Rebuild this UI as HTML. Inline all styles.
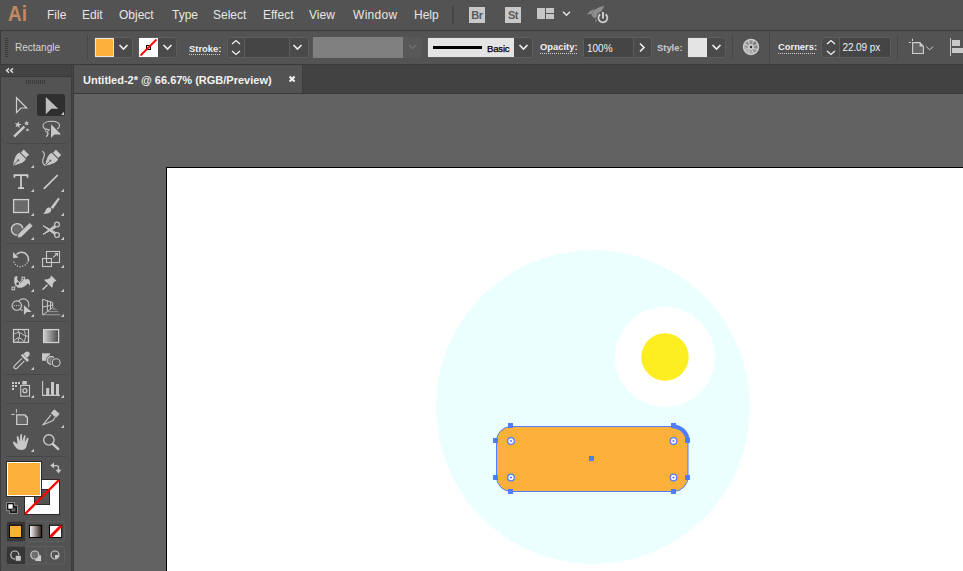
<!DOCTYPE html>
<html><head><meta charset="utf-8">
<style>
*{margin:0;padding:0;box-sizing:border-box}
html,body{width:963px;height:571px;overflow:hidden;background:#535353;font-family:"Liberation Sans",sans-serif;position:relative}
.a{position:absolute}
.menu{left:0;top:0;width:963px;height:30px;background:#535353}
.mi{position:absolute;top:8px;font-size:12px;color:#e6e6e6;line-height:14px;white-space:nowrap}
.ctl{left:0;top:30px;width:963px;height:35px;background:#535353;border-top:1px solid #3a3a3a;border-bottom:1px solid #3a3a3a}
.lbl{position:absolute;font-size:9.4px;font-weight:700;color:#f0f0f0;line-height:12px;white-space:nowrap}
.frame{position:absolute;border:1px solid #5d5d5d;border-radius:3px;background:#4a4a4a}
.chev{position:absolute}
.tabbar{left:72px;top:65px;width:891px;height:29px;background:#424242;border-bottom:1px solid #3a3a3a}
.paste{left:74px;top:94px;width:889px;height:477px;background:#626262}
.panel{left:0;top:65px;width:72px;height:506px;background:#535353}
.sep{position:absolute;background:#474747;height:1px}
.tri{position:absolute;width:0;height:0;border-left:4px solid transparent;border-bottom:4px solid #c4c4c4}
</style></head><body>

<!-- MENU BAR -->
<div class="a menu">
  <div class="a" style="left:8px;top:2px;font-size:22px;font-weight:700;color:#c48a60;line-height:24px;transform:scaleX(0.86);transform-origin:0 0">Ai</div>
  <div class="mi" style="left:47px">File</div>
  <div class="mi" style="left:82px">Edit</div>
  <div class="mi" style="left:119px">Object</div>
  <div class="mi" style="left:172px">Type</div>
  <div class="mi" style="left:213px">Select</div>
  <div class="mi" style="left:263px">Effect</div>
  <div class="mi" style="left:309px">View</div>
  <div class="mi" style="left:353px;letter-spacing:0.3px">Window</div>
  <div class="mi" style="left:414px">Help</div>
  <div class="a" style="left:452px;top:6px;width:2px;height:18px;background:#474747"></div>
  <div class="a" style="left:469px;top:7px;width:16px;height:16px;background:#c8c8c8;color:#5a5a5a;font-size:11px;font-weight:700;line-height:17px;text-align:center;letter-spacing:-0.4px">Br</div>
  <div class="a" style="left:505px;top:7px;width:16px;height:16px;background:#c8c8c8;color:#5a5a5a;font-size:11px;font-weight:700;line-height:17px;text-align:center;letter-spacing:-0.4px">St</div>
  <div class="a" style="left:537px;top:8px;width:8px;height:11px;background:#c6c6c6"></div>
  <div class="a" style="left:546px;top:8px;width:8px;height:5px;background:#c6c6c6"></div>
  <div class="a" style="left:546px;top:14px;width:8px;height:5px;background:#c6c6c6"></div>
  <svg class="a" style="left:562px;top:10px" width="10" height="7"><path d="M1 1.8 L4.5 5.2 L8 1.8" fill="none" stroke="#e0e0e0" stroke-width="1.6"/></svg>
  <svg class="a" style="left:580px;top:0" width="36" height="30" viewBox="580 0 36 30">
    <path d="M604.2 5.8 C600 6.3 595.8 8.4 593.1 11.6 L591.3 15.8 L595.2 18.4 C597.9 15.8 602.1 12.1 604.2 5.8 Z" fill="#8c8c8c"/>
    <path d="M594.7 9.2 C591 9.8 588.5 11.8 586.8 14.5 L591.5 14 Z" fill="#8c8c8c"/>
    <path d="M595.8 17.9 L595.2 22.6 L597.6 19.8 Z" fill="#8c8c8c"/>
    <circle cx="602.9" cy="17.9" r="6.6" fill="#535353"/>
    <path d="M600.2 14.2 A4.5 4.5 0 1 0 605.6 14.2" fill="none" stroke="#d2d2d2" stroke-width="1.7"/>
    <rect x="602" y="12" width="1.9" height="6.6" fill="#d2d2d2"/>
  </svg>
</div>

<!-- CONTROL BAR -->
<div class="a ctl"></div>
<div class="a" style="left:0;top:30px;width:1px;height:35px;background:#3a3a3a"></div>
<div class="a" style="left:5px;top:38px;width:3px;height:20px;background:repeating-linear-gradient(#3a3a3a 0 1px,transparent 1px 2px)"></div>
<div class="a" style="left:15px;top:42px;font-size:10px;color:#d4d4d4;line-height:12px">Rectangle</div>
<div class="a" style="left:87px;top:35px;width:1px;height:25px;background:#474747"></div>

<!-- fill -->
<div class="frame" style="left:94px;top:37px;width:39px;height:21px"></div>
<div class="a" style="left:95px;top:38px;width:19px;height:19px;background:#fbb03b;border:1px solid #e6e6e6"></div>
<svg class="a" style="left:118px;top:43px" width="11" height="8"><path d="M1.5 2 L5.5 6 L9.5 2" fill="none" stroke="#f0f0f0" stroke-width="1.6"/></svg>
<!-- stroke -->
<div class="frame" style="left:138px;top:37px;width:39px;height:21px"></div>
<div class="a" style="left:139px;top:38px;width:19px;height:19px;background:#fff;overflow:hidden">
  <svg width="19" height="19"><rect x="7.5" y="7.5" width="4" height="4" fill="#fff" stroke="#000" stroke-width="1"/><path d="M1.5 17.5 L17.5 1.5" stroke="#f00" stroke-width="1.8"/></svg>
</div>
<svg class="a" style="left:162px;top:43px" width="11" height="8"><path d="M1.5 2 L5.5 6 L9.5 2" fill="none" stroke="#f0f0f0" stroke-width="1.6"/></svg>

<div class="lbl" style="left:189px;top:43px">Stroke:</div>
<div class="a" style="left:189px;top:54px;width:32px;height:1px;background:repeating-linear-gradient(90deg,#cfcfcf 0 1px,transparent 1px 2px)"></div>
<div class="frame" style="left:227px;top:37px;width:82px;height:21px;background:#4a4a4a"></div>
<div class="a" style="left:244px;top:38px;width:46px;height:19px;background:#454545;border-left:1px solid #5d5d5d;border-right:1px solid #5d5d5d"></div>
<svg class="a" style="left:230px;top:38px" width="12" height="19"><path d="M2 6 L6 2.5 L10 6 M2 13 L6 16.5 L10 13" fill="none" stroke="#f0f0f0" stroke-width="1.3"/></svg>
<svg class="a" style="left:292px;top:43px" width="11" height="8"><path d="M1.5 2 L5.5 6 L9.5 2" fill="none" stroke="#f0f0f0" stroke-width="1.6"/></svg>

<!-- variable width (disabled) -->
<div class="frame" style="left:312px;top:37px;width:110px;height:21px;background:#585858;border-color:#585858"></div>
<div class="a" style="left:313px;top:37px;width:90px;height:21px;background:#808080"></div>
<svg class="a" style="left:407px;top:43px" width="11" height="8"><path d="M2 2 L5.5 5.5 L9 2" fill="none" stroke="#6e6e6e" stroke-width="1.6"/></svg>

<!-- brush Basic -->
<div class="frame" style="left:427px;top:37px;width:106px;height:21px"></div>
<div class="a" style="left:428px;top:38px;width:86px;height:19px;background:#e4e4e4"></div>
<div class="a" style="left:433px;top:46px;width:49px;height:3px;background:#000"></div>
<div class="a" style="left:487px;top:43px;font-size:9.6px;font-weight:400;color:#000;line-height:12px;-webkit-text-stroke:0.25px #000;letter-spacing:-0.2px">Basic</div>
<svg class="a" style="left:518px;top:43px" width="11" height="8"><path d="M1.5 2 L5.5 6 L9.5 2" fill="none" stroke="#f0f0f0" stroke-width="1.6"/></svg>

<div class="lbl" style="left:540px;top:41px">Opacity:</div>
<div class="a" style="left:540px;top:53px;width:37px;height:1px;background:repeating-linear-gradient(90deg,#cfcfcf 0 1px,transparent 1px 2px)"></div>
<div class="frame" style="left:583px;top:37px;width:69px;height:21px"></div>
<div class="a" style="left:584px;top:38px;width:50px;height:19px;background:#454545;border-right:1px solid #5d5d5d"></div>
<div class="a" style="left:587px;top:42.5px;font-size:10px;color:#f0f0f0;line-height:12px">100%</div>
<svg class="a" style="left:638px;top:42px" width="8" height="11"><path d="M2 1.5 L6 5.5 L2 9.5" fill="none" stroke="#f0f0f0" stroke-width="1.6"/></svg>

<div class="a" style="left:657px;top:42px;font-size:9.4px;font-weight:700;color:#cccccc;line-height:12px">Style:</div>
<div class="frame" style="left:687px;top:37px;width:39px;height:21px"></div>
<div class="a" style="left:688px;top:38px;width:19px;height:19px;background:#e4e4e4"></div>
<svg class="a" style="left:711px;top:43px" width="11" height="8"><path d="M1.5 2 L5.5 6 L9.5 2" fill="none" stroke="#f0f0f0" stroke-width="1.6"/></svg>
<div class="a" style="left:732px;top:35px;width:1px;height:25px;background:#474747"></div>

<svg class="a" style="left:742px;top:38px" width="18" height="18" viewBox="0 0 18 18">
  <circle cx="9" cy="9" r="8.2" fill="#cdcdcd"/>
  <path d="M8.12 6.13 L7.04 2.59 A6.7 6.7 0 0 1 10.96 2.59 L9.88 6.13 Z" fill="#8e8e8e"/><path d="M10.41 6.35 L12.15 3.08 A6.7 6.7 0 0 1 14.92 5.85 L11.65 7.59 Z" fill="#7f7f7f"/><path d="M11.87 8.12 L15.41 7.04 A6.7 6.7 0 0 1 15.41 10.96 L11.87 9.88 Z" fill="#8a8a8a"/><path d="M11.65 10.41 L14.92 12.15 A6.7 6.7 0 0 1 12.15 14.92 L10.41 11.65 Z" fill="#9a9a9a"/><path d="M9.88 11.87 L10.96 15.41 A6.7 6.7 0 0 1 7.04 15.41 L8.12 11.87 Z" fill="#a8a8a8"/><path d="M7.59 11.65 L5.85 14.92 A6.7 6.7 0 0 1 3.08 12.15 L6.35 10.41 Z" fill="#b0b0b0"/><path d="M6.13 9.88 L2.59 10.96 A6.7 6.7 0 0 1 2.59 7.04 L6.13 8.12 Z" fill="#a0a0a0"/><path d="M6.35 7.59 L3.08 5.85 A6.7 6.7 0 0 1 5.85 3.08 L7.59 6.35 Z" fill="#989898"/>
  <circle cx="9" cy="9" r="1.2" fill="#2e2e2e"/>
</svg>
<div class="a" style="left:769px;top:32px;width:1px;height:31px;background:#474747"></div>

<div class="lbl" style="left:778px;top:41px">Corners:</div>
<div class="a" style="left:778px;top:53px;width:38px;height:1px;background:repeating-linear-gradient(90deg,#cfcfcf 0 1px,transparent 1px 2px)"></div>
<div class="frame" style="left:821px;top:37px;width:70px;height:21px"></div>
<div class="a" style="left:839px;top:38px;width:51px;height:19px;background:#454545;border-left:1px solid #5d5d5d"></div>
<svg class="a" style="left:825px;top:38px" width="12" height="19"><path d="M2 6 L6 2.5 L10 6 M2 13 L6 16.5 L10 13" fill="none" stroke="#f0f0f0" stroke-width="1.3"/></svg>
<div class="a" style="left:842.5px;top:42.3px;font-size:10px;letter-spacing:-0.1px;color:#f0f0f0;line-height:12px">22.09 px</div>
<div class="a" style="left:897px;top:35px;width:1px;height:25px;background:#474747"></div>

<svg class="a" style="left:900px;top:30px" width="40" height="30" viewBox="900 30 40 30">
  <path d="M912.5 38.8 V41 M908.8 42.5 H911" stroke="#cfcfcf" stroke-width="1"/>
  <path d="M912.6 42.6 H919.8 L923.4 46.2 V53.5 H912.6 Z" fill="#656565" stroke="#cfcfcf" stroke-width="1.1"/>
  <path d="M919.6 42.6 L923.4 46.4 H919.6 Z" fill="#cfcfcf"/>
  <path d="M926.2 46.6 L929.7 49.8 L933.2 46.6" fill="none" stroke="#c8c8c8" stroke-width="1"/>
</svg>
<div class="a" style="left:950px;top:38px;width:1px;height:18px;background:#c8c8c8"></div>
<div class="a" style="left:952px;top:40px;width:8px;height:6px;background:#c8c8c8"></div>
<div class="a" style="left:952px;top:48px;width:11px;height:5px;background:#c8c8c8"></div>

<!-- TAB BAR -->
<div class="a tabbar"></div>
<div class="a" style="left:71px;top:65px;width:3px;height:506px;background:linear-gradient(90deg,#3d3d3d 0 1px,#464646 1px 2px,#3a3a3a 2px 3px)"></div>
<div class="a" style="left:74px;top:65px;width:228px;height:28px;background:#535353"></div><div class="a" style="left:302px;top:65px;width:1px;height:28px;background:#3c3c3c"></div>
<div class="a" style="left:83px;top:74px;font-size:11px;font-weight:700;color:#f2f2f2;line-height:13px;white-space:nowrap">Untitled-2* @ 66.67% (RGB/Preview)</div>
<svg class="a" style="left:288px;top:75px" width="9" height="9"><path d="M1.6 1.6 L6.6 6.6 M6.6 1.6 L1.6 6.6" stroke="#f2f2f2" stroke-width="2.1"/></svg>

<!-- PASTEBOARD -->
<div class="a paste"></div>
<div class="a" style="left:166px;top:167px;width:797px;height:404px;background:#fff;border-left:1px solid #000;border-top:1px solid #000"></div>

<!-- ARTWORK -->
<svg class="a" style="left:0;top:0" width="963" height="571">
  <circle cx="593" cy="407" r="157" fill="#ebffff"/>
  <circle cx="665" cy="357" r="50" fill="#ffffff"/>
  <circle cx="665" cy="357" r="23.7" fill="#fcee21"/>
  <rect x="496.5" y="426.5" width="191.5" height="65" rx="14.7" ry="14.7" fill="#fbb03b" stroke="#4f7dff" stroke-width="1"/>
  <path d="M673 426.5 A14.7 14.7 0 0 1 687.7 441" fill="none" stroke="#4f7dff" stroke-width="4"/>
  <g fill="#4f7dff">
    <rect x="508" y="423" width="5" height="5"/><rect x="671" y="423" width="5" height="5"/>
    <rect x="508" y="489" width="5" height="5"/><rect x="671" y="489" width="5" height="5"/>
    <rect x="493" y="438" width="5" height="5"/><rect x="685" y="438" width="5" height="5"/>
    <rect x="493" y="475" width="5" height="5"/><rect x="685" y="475" width="5" height="5"/>
    <rect x="589" y="456" width="5" height="5"/>
  </g>
  <g fill="#fff" stroke="#4f7dff" stroke-width="1.3">
    <circle cx="511" cy="441" r="3.3"/><circle cx="673.5" cy="441" r="3.3"/>
    <circle cx="511" cy="477.5" r="3.3"/><circle cx="673.5" cy="477.5" r="3.3"/>
  </g>
  <g fill="#4f7dff">
    <circle cx="511" cy="441" r="1.1"/><circle cx="673.5" cy="441" r="1.1"/>
    <circle cx="511" cy="477.5" r="1.1"/><circle cx="673.5" cy="477.5" r="1.1"/>
  </g>
</svg>

<!-- TOOLS PANEL -->
<div class="a" style="left:0;top:65px;width:71px;height:11px;background:#434343"></div>
<div class="a" style="left:0;top:76px;width:71px;height:1px;background:#3a3a3a"></div>
<div class="a" style="left:0;top:77px;width:71px;height:494px;background:#535353;border-left:1px solid #3d3d3d"></div>
<svg class="a" style="left:0;top:62px" width="20" height="14"><path d="M9 6.4 L6.6 8.6 L9 10.8 M13 6.4 L10.6 8.6 L13 10.8" fill="none" stroke="#d8d8d8" stroke-width="1.5" stroke-linejoin="miter"/></svg>
<div class="a" style="left:26px;top:80px;width:20px;height:4px;background:repeating-linear-gradient(90deg,#3a3a3a 0 1px,transparent 1px 2px)"></div>


<!-- TOOLS SVG -->
<svg class="a" style="left:0;top:0" width="72" height="571" viewBox="0 0 72 571">
 <defs>
  <linearGradient id="gt" x1="0" x2="1" y1="0" y2="0"><stop offset="0" stop-color="#cfcfcf"/><stop offset="1" stop-color="#474747"/></linearGradient>
  <linearGradient id="gs" x1="0" x2="1" y1="0" y2="0"><stop offset="0" stop-color="#ffffff"/><stop offset="1" stop-color="#2a1a16"/></linearGradient>
 </defs>
 <g fill="#c8c8c8">
  <!-- tiny triangles -->
  <path d="M61 115 H64 V111.8 Z"/>
  <path d="M30.8 168 H34 V164.8 Z"/>
  <path d="M30.8 192 H34 V188.8 Z"/><path d="M60.8 192 H64 V188.8 Z"/>
  <path d="M30.8 216 H34 V212.8 Z"/><path d="M60.8 216 H64 V212.8 Z"/>
  <path d="M30.8 240 H34 V236.8 Z"/><path d="M60.8 240 H64 V236.8 Z"/>
  <path d="M30.8 268 H34 V264.8 Z"/><path d="M60.8 268 H64 V264.8 Z"/>
  <path d="M30.8 292 H34 V288.8 Z"/><path d="M60.8 292 H64 V288.8 Z"/>
  <path d="M30.8 317 H34 V313.8 Z"/><path d="M60.8 317 H64 V313.8 Z"/>
  <path d="M30.8 370 H34 V366.8 Z"/>
  <path d="M30.8 398 H34 V394.8 Z"/><path d="M60.8 398 H64 V394.8 Z"/>
  <path d="M60.8 428 H64 V424.8 Z"/>
  <path d="M30.8 452 H34 V448.8 Z"/>
 </g>
 <!-- separators -->
 <g fill="#474747">
  <rect x="6" y="143" width="60" height="1"/>
  <rect x="6" y="243" width="60" height="1"/>
  <rect x="6" y="321" width="60" height="1"/>
  <rect x="6" y="374" width="60" height="1"/>
  <rect x="6" y="403" width="60" height="1"/>
  <rect x="6" y="456" width="60" height="1"/>
 </g>
 <!-- selection -->
 <rect x="37" y="94" width="28" height="22" rx="2.5" fill="#2f2f2f"/>
 <path d="M16.5 97.8 V112.6 L21 108 H26.7 Z" fill="none" stroke="#cfcfcf" stroke-width="1.2" stroke-linejoin="miter"/>
 <path d="M45.8 97 V114.3 L51.4 108.8 H58.3 Z" fill="#bdbdbd"/>
 <path d="M61 115 H64 V111.8 Z" fill="#c8c8c8"/>
 <!-- magic wand -->
 <g fill="#c8c8c8">
  <path d="M13.2 135.8 L23.4 125.8 L25.2 127.6 L15 137.6 Z"/>
  <path d="M18.63 121.25 L19.09 123.75 L21.56 124.30 L19.34 125.51 L19.58 128.04 L17.74 126.29 L15.41 127.30 L16.50 125.01 L14.82 123.11 L17.34 123.44 Z"/><path d="M26.11 120.54 L27.12 122.24 L29.07 121.99 L27.76 123.46 L28.61 125.25 L26.80 124.46 L25.37 125.82 L25.56 123.85 L23.83 122.91 L25.75 122.48 Z"/><path d="M27.50 127.90 L28.03 129.17 L29.40 129.28 L28.36 130.18 L28.68 131.52 L27.50 130.80 L26.32 131.52 L26.64 130.18 L25.60 129.28 L26.97 129.17 Z"/>
 </g>
 <!-- lasso -->
 <path d="M49.8 129.6 C46.5 130 43 128.6 43 125.8 C43 122.8 47 121.2 51.5 121.2 C56 121.2 59.5 122.8 59.5 125.5 C59.5 127 58.5 128.2 57 129" fill="none" stroke="#c8c8c8" stroke-width="1.1"/>
 <circle cx="46.8" cy="130.6" r="1.5" fill="none" stroke="#c8c8c8" stroke-width="1"/>
 <path d="M47.6 132 C48.3 133.5 47.8 135.5 46.2 136.8" fill="none" stroke="#c8c8c8" stroke-width="1.1"/>
 <path d="M51.1 124.2 V138 L54.3 134.4 H61.1 Z" fill="#535353" stroke="#535353" stroke-width="1.6"/>
 <path d="M51.1 124.2 V138 L54.3 134.4 H61.1 Z" fill="#c8c8c8"/>
 <!-- pen -->
 <g transform="translate(13.3,165.2) rotate(45) translate(0,-18.5)" fill="#c8c8c8">
  <rect x="-3.7" y="0" width="7.4" height="4.3"/>
  <path d="M-4.6 5.3 H4.6 C5.6 8.5 5 11.5 0.3 18.5 L-0.3 18.5 C-5 11.5 -5.6 8.5 -4.6 5.3 Z"/>
  <path d="M0 18.5 V12" stroke="#535353" stroke-width="0.9"/>
  <circle cx="0" cy="11.5" r="1" fill="#535353"/>
 </g>
 <!-- curvature pen -->
 <g transform="translate(45.5,165.4) rotate(45) translate(0,-18.5)" fill="#c8c8c8">
  <rect x="-3.7" y="0" width="7.4" height="4.3"/>
  <path d="M-4.6 5.3 H4.6 C5.6 8.5 5 11.5 0.3 18.5 L-0.3 18.5 C-5 11.5 -5.6 8.5 -4.6 5.3 Z"/>
  <path d="M0 18.5 V12" stroke="#535353" stroke-width="0.9"/>
  <circle cx="0" cy="11.5" r="1" fill="#535353"/>
 </g>
 <path d="M42.2 151.3 C45 152.5 44.8 155 43.4 158 C42 161 42.3 164 45.5 165.4" fill="none" stroke="#c8c8c8" stroke-width="1.1"/>
 <!-- type -->
 <path d="M14.4 177.8 V175.2 H27.5 V177.8 M21 175.2 V188.2 M18 188.2 H24" fill="none" stroke="#d0d0d0" stroke-width="1.7"/>
 <!-- line -->
 <path d="M43.8 188.8 L57.7 175" stroke="#cfcfcf" stroke-width="1.7"/>
 <!-- rect -->
 <rect x="13.6" y="199.6" width="14.9" height="12.9" fill="#6a6a6a" stroke="#d0d0d0" stroke-width="1.3"/>
 <!-- brush -->
 <g fill="#c8c8c8">
  <path d="M57.6 198.4 C58.6 197.4 60 198.2 59.4 199.6 L53 209 L50.7 207.2 Z"/>
  <path d="M48.6 207.5 C51 207 52 209.5 51 211.3 C49.8 213.5 46 214 43 213.8 C45 212.5 45.5 210.5 46 209.5 C46.6 208.3 47.5 207.7 48.6 207.5 Z"/>
 </g>
 <!-- shaper -->
 <circle cx="17.2" cy="229.4" r="5.8" fill="#6a6a6a" stroke="#d0d0d0" stroke-width="1.3"/>
 <path d="M18 237.2 L18.68 233.89 L29.68 223.24 L32.32 225.96 L21.32 236.61 Z" fill="#535353" stroke="#535353" stroke-width="2.2" stroke-linejoin="round"/>
 <path d="M18 237.2 L18.68 233.89 L29.68 223.24 L32.32 225.96 L21.32 236.61 Z" fill="#c8c8c8" stroke="#c8c8c8" stroke-width="0.6" stroke-linejoin="round"/>
 <!-- scissors -->
 <g fill="none" stroke="#c8c8c8">
  <circle cx="57" cy="224.6" r="2.4" stroke-width="1.2"/>
  <circle cx="57" cy="235.1" r="2.4" stroke-width="1.2"/>
 </g>
 <path d="M43 225.6 L55.4 232.3 L54.3 234.3 Z" fill="#c8c8c8" stroke="#c8c8c8" stroke-width="1" stroke-linejoin="round"/>
 <path d="M43 234.4 L55.4 227.7 L54.3 225.7 Z" fill="#c8c8c8" stroke="#c8c8c8" stroke-width="1" stroke-linejoin="round"/>
 <!-- rotate -->
 <path d="M16.5 254.5 C19.5 251.5 24.5 251.5 27 255 C28.5 257 28.6 259.5 28.2 261.5" fill="none" stroke="#c8c8c8" stroke-width="1.5"/>
 <path d="M13 252 L13.2 258.2 L18.5 257.5 Z" fill="#c8c8c8"/>
 <g fill="#c8c8c8">
  <circle cx="14" cy="262.2" r="0.7"/><circle cx="15.5" cy="264.4" r="0.7"/><circle cx="17.6" cy="266" r="0.7"/>
  <circle cx="20.2" cy="266.7" r="0.7"/><circle cx="22.8" cy="266.3" r="0.7"/><circle cx="25.2" cy="265" r="0.7"/><circle cx="27" cy="263" r="0.7"/>
 </g>
 <!-- scale -->
 <g fill="none" stroke="#c8c8c8" stroke-width="1.1">
  <rect x="46.5" y="251.5" width="13" height="11"/>
  <rect x="42.5" y="258.5" width="9" height="8"/>
  <path d="M53.3 257.3 L57.5 253.2"/>
 </g>
 <path d="M54.5 253 H58 V256.5 Z" fill="#c8c8c8"/>
 <!-- puppet warp -->
 <path d="M14.2 279.1 C14.5 277 15 276.3 15.8 276.3 C16.8 276.2 17.7 276.5 17.7 276.9 C17 277.8 17 279 17.3 279.5 C17.8 281 18.6 281.9 20 281.5 C21.5 281 23 280.3 24.5 279.6 C26.5 278.7 28.5 279 29.5 280.5 C30.3 282 30.2 284.5 29.8 286 C29.3 284.6 28.7 283.5 27.9 283.5 C26.5 284.5 25.5 286 24.2 286.6 C23 287.4 21.5 287.8 20.5 287.8 C18.5 287.8 16.5 287.3 15.5 286 C14.5 284.5 14 282 14.2 279.1 Z" fill="#c8c8c8"/>
 <path d="M13.3 288.5 L23.3 278.5" stroke="#535353" stroke-width="1.8"/>
 <path d="M13.3 288.5 L23.3 278.5" stroke="#c8c8c8" stroke-width="0.8"/>
 <circle cx="17.7" cy="283.8" r="2" fill="#535353" stroke="#c8c8c8" stroke-width="1.1"/>
 <rect x="12" y="287.2" width="2.6" height="2.6" fill="#535353" stroke="#c8c8c8" stroke-width="1"/>
 <rect x="22" y="277.2" width="2.6" height="2.6" fill="#535353" stroke="#c8c8c8" stroke-width="1"/>
 <!-- pin -->
 <path d="M51 275.2 L56.5 280.8 L54.5 281.5 C53 283 52.5 284.5 52.8 286.3 L52 287.8 L44.2 280 L45.7 279.2 C47.5 279.5 49 279 50.5 277.5 Z" fill="#c8c8c8"/>
 <path d="M43 289.2 L47 285.2" stroke="#c8c8c8" stroke-width="1.6" stroke-linecap="round"/>
 <!-- shape builder -->
 <circle cx="16.8" cy="305.6" r="4.7" fill="none" stroke="#c8c8c8" stroke-width="1.1"/>
 <path d="M18.6 301.2 C20 299.3 22 298.9 23.3 298.9 C26.5 298.9 28.9 301.4 28.9 304.6 C28.9 305.5 28.7 306.3 28.4 307" fill="none" stroke="#c8c8c8" stroke-width="1.1"/>
 <path d="M23.2 310.3 C21.8 310.3 20.6 310 19.6 309.4" fill="none" stroke="#c8c8c8" stroke-width="1.1"/>
 <g fill="#c8c8c8"><circle cx="14.3" cy="305.6" r="0.65"/><circle cx="16.6" cy="305.6" r="0.65"/><circle cx="18.9" cy="305.6" r="0.65"/><circle cx="21.2" cy="305.6" r="0.65"/><circle cx="23.3" cy="305.6" r="0.65"/></g>
 <path d="M23.9 305.3 V315 L26.8 312 H31.7 Z" fill="#535353" stroke="#535353" stroke-width="1.6"/>
 <path d="M23.9 305.3 V315 L26.8 312 H31.7 Z" fill="#c8c8c8"/>
 <!-- perspective grid -->
 <g fill="none" stroke="#c8c8c8" stroke-width="1">
  <path d="M42.6 299.3 V315 L52.7 307.7 V302.5 Z"/>
  <path d="M42.6 307 L52.7 305 M47.4 300.8 V311.6 M50.5 301.8 V309.3"/>
 </g>
 <path d="M52.7 306 L57.5 310 H52.7 Z" fill="#7a7a7a"/>
 <rect x="46.5" y="311.2" width="12" height="0.9" fill="#a0a0a0"/>
 <rect x="42.5" y="314.3" width="17.7" height="0.9" fill="#a8a8a8"/>
 <!-- mesh -->
 <rect x="13.5" y="329.5" width="15" height="12.8" fill="none" stroke="#d0d0d0" stroke-width="1.2"/>
 <g fill="none" stroke="#c8c8c8" stroke-width="1">
  <path d="M17.2 329.5 C18.5 331 19.5 333 19.5 335.2 C19.5 337.5 18.3 339.5 17.9 342.2"/>
  <path d="M13.5 334.4 C15 333.3 16.8 332.6 18.6 332.7 C20.8 332.8 22.6 334.2 24.5 335.6 C25.3 336.1 26 336.1 28.5 336.1"/>
  <path d="M23.5 329.5 C24.8 331.5 25.5 334 25.5 336.5 C25.5 338.8 24.5 340.7 23.6 342.2"/>
  <path d="M13.8 341.3 C15 339.6 16.5 338.2 18.3 338 C20 337.9 22 339 23.4 340.9"/>
 </g>
 <!-- gradient -->
 <rect x="43.6" y="329.6" width="15" height="12.9" fill="url(#gt)" stroke="#d0d0d0" stroke-width="1.3"/>
 <!-- eyedropper -->
 <g fill="#c8c8c8">
  <path d="M25.2 352.2 C26.3 351.1 28.1 351.2 29 352.2 C29.9 353.1 30 354.9 28.9 356 L27.2 357.7 L23.5 354 Z"/>
  <path d="M20.8 355.6 L22.7 353.7 L29.1 360.1 L27.2 362 Z"/>
 </g>
 <path d="M21.9 358.3 L14.6 365.6 C13.8 366.5 13.7 367.6 14.5 368.3 C15.3 369 16.3 368.9 17.1 368.1 L24.4 360.8" fill="#535353" stroke="#c8c8c8" stroke-width="1.2"/>
 <!-- blend -->
 <rect x="42" y="353.3" width="8" height="7.5" fill="#c8c8c8"/>
 <path d="M49.5 356.5 H52.5 L55 359 V362 L52.5 364.3 H49.5 L47.3 362 V358.7 Z" fill="#7e7e7e" stroke="#535353" stroke-width="2.4"/>
 <path d="M49.5 356.5 H52.5 L55 359 V362 L52.5 364.3 H49.5 L47.3 362 V358.7 Z" fill="#7e7e7e" stroke="#c8c8c8" stroke-width="1.1"/>
 <circle cx="56.2" cy="362.6" r="3.9" fill="#535353" stroke="#535353" stroke-width="2.4"/>
 <circle cx="56.2" cy="362.6" r="3.9" fill="#535353" stroke="#c8c8c8" stroke-width="1.1"/>
 <!-- symbol sprayer -->
 <g fill="#c8c8c8">
  <rect x="12" y="382" width="2" height="2"/><rect x="15" y="382" width="2" height="2"/><rect x="18" y="382" width="2" height="2"/>
  <rect x="12" y="385" width="2" height="2"/><rect x="15" y="385" width="2" height="2"/>
  <rect x="12" y="388" width="2" height="2"/>
  <rect x="22.3" y="381" width="4.5" height="3.5"/>
 </g>
 <rect x="20.7" y="385.4" width="8.8" height="10.8" fill="none" stroke="#c8c8c8" stroke-width="1.1"/>
 <circle cx="24.9" cy="390.7" r="2" fill="none" stroke="#c8c8c8" stroke-width="1.3"/>
 <!-- column graph -->
 <path d="M42.6 381 V395.4 H60" fill="none" stroke="#c8c8c8" stroke-width="1.1"/>
 <g fill="#c8c8c8"><rect x="46.2" y="388" width="3" height="7.5"/><rect x="51" y="382" width="3" height="13.5"/><rect x="56" y="384" width="3" height="11.5"/></g>
 <!-- artboard -->
 <path d="M16.4 409 V412.8 M11.1 414.4 H14.9" stroke="#c8c8c8" stroke-width="1"/>
 <path d="M16.7 414.8 H25 L27.4 417.2 V424.5 H16.7 Z" fill="#666" stroke="#d0d0d0" stroke-width="1.2"/>
 <path d="M25 414.8 V417.2 H27.4 Z" fill="#c8c8c8"/>
 <!-- pencil -->
 <path d="M51.8 413.3 L54.4 410.3 L58.7 414.1 L56 416.7 Z" fill="#c8c8c8" stroke="#c8c8c8" stroke-width="1.4" stroke-linejoin="round"/>
 <path d="M51 414.9 L42.7 425.1 L53.1 420.4 L55.1 417.3" fill="none" stroke="#c8c8c8" stroke-width="1.1" stroke-linejoin="round"/>
 <!-- hand -->
 <path d="M16.3 448 C14.5 446 13.2 443.8 13 442.5 C12.8 441.7 13.5 441.2 14.3 441.7 L17.5 444 L16.7 437 C16.6 436 18.3 435.8 18.5 436.8 L19.8 441.5 L20.3 434.7 C20.4 433.7 22 433.7 22 434.7 L22.3 441.3 L24 435.7 C24.3 434.8 25.8 435 25.7 436 L24.8 442 L27 438.2 C27.5 437.4 28.8 437.8 28.6 438.8 L26.5 446.5 C25.8 448.8 24.3 450 21.5 450 C19 450 17.3 449.2 16.3 448 Z" fill="#c8c8c8"/>
 <!-- zoom -->
 <circle cx="48.9" cy="439.9" r="5.2" fill="none" stroke="#c8c8c8" stroke-width="1.4"/>
 <path d="M52.8 444 L58.2 449" stroke="#c8c8c8" stroke-width="2.4" stroke-linecap="round"/>

 <!-- fill/stroke -->
 <rect x="24.5" y="479.5" width="35" height="35" fill="#fff" stroke="#2a2a2a" stroke-width="1"/>
 <rect x="34.5" y="489.5" width="15" height="15" fill="#535353" stroke="#2a2a2a" stroke-width="1"/>
 <path d="M25 514 L59 480" stroke="#ff0000" stroke-width="2.4"/>
 <rect x="6.5" y="461.5" width="35" height="35" fill="#fff" stroke="#2a2a2a" stroke-width="1"/>
 <rect x="8" y="463" width="32" height="32" fill="#fbb03b"/>
 <!-- swap -->
 <path d="M53 465.6 H56.6 Q58.5 465.6 58.5 467.5 V470.5" fill="none" stroke="#c8c8c8" stroke-width="1.4"/>
 <path d="M50.2 465.5 L54 462.6 V468.4 Z M58.5 473.6 L55.6 469.8 H61.4 Z" fill="#c8c8c8"/>
  <!-- default -->
 <path d="M6.5 502.5 H14.5 V505.5 H17.5 V513.5 H9.5 V510.5 H6.5 Z" fill="#1a1a1a" stroke="#8c8c8c" stroke-width="1"/>
 <rect x="11.5" y="507.5" width="4" height="4" fill="#535353"/>
 <path d="M13.5 509.5 V510 H12" fill="none" stroke="#cfcfcf" stroke-width="0.8"/>
 <rect x="7.5" y="503.5" width="6" height="6" fill="#111"/>
 <rect x="8.3" y="504.3" width="4.4" height="4.4" fill="#fff"/>
  <!-- color mode row -->
 <rect x="6.5" y="521.5" width="58" height="20" rx="2.5" fill="#535353" stroke="#5e5e5e" stroke-width="1"/>
 <path d="M9 521.5 H25.5 V541.5 H9 A2.5 2.5 0 0 1 6.5 539 V524 A2.5 2.5 0 0 1 9 521.5 Z" fill="#363636"/>
 <rect x="25.5" y="522" width="1" height="19" fill="#5e5e5e"/>
 <rect x="45.5" y="522" width="1" height="19" fill="#5e5e5e"/>
 <rect x="9.5" y="525.3" width="12.2" height="12.2" fill="#fbb03b" stroke="#000" stroke-width="1"/>
 <rect x="29.5" y="525.3" width="12.2" height="12.2" fill="url(#gs)" stroke="#000" stroke-width="1"/>
 <rect x="49.5" y="525.3" width="12.2" height="12.2" fill="#fff" stroke="#000" stroke-width="1"/>
 <path d="M50.2 537 L61.2 525.8" stroke="#f00" stroke-width="2.8"/>
 <!-- draw mode row -->
 <rect x="6.5" y="546.5" width="58" height="17.5" rx="2.5" fill="#535353" stroke="#5e5e5e" stroke-width="1"/>
 <path d="M9 546.5 H25.5 V564 H9 A2.5 2.5 0 0 1 6.5 561.5 V549 A2.5 2.5 0 0 1 9 546.5 Z" fill="#363636"/>
 <rect x="25.5" y="547" width="1" height="17" fill="#5e5e5e"/>
 <rect x="45.5" y="547" width="1" height="17" fill="#5e5e5e"/>
 <circle cx="14.8" cy="555" r="4" fill="#3a3a3a" stroke="#c8c8c8" stroke-width="1.2"/>
 <rect x="15.3" y="555.3" width="5.8" height="5.8" fill="#c8c8c8" stroke="#363636" stroke-width="0.6"/>
 <rect x="35.3" y="555.3" width="5.8" height="5.8" fill="#c8c8c8"/>
 <circle cx="34.8" cy="555" r="4" fill="#6e6e6e" stroke="#c8c8c8" stroke-width="1.2"/>
 <circle cx="55" cy="555" r="4" fill="#535353" stroke="#c8c8c8" stroke-width="1.2"/>
 <path d="M55 555 H58.6 A3.6 3.6 0 0 1 55 558.6 Z" fill="#c8c8c8"/>
</svg>

</body></html>
